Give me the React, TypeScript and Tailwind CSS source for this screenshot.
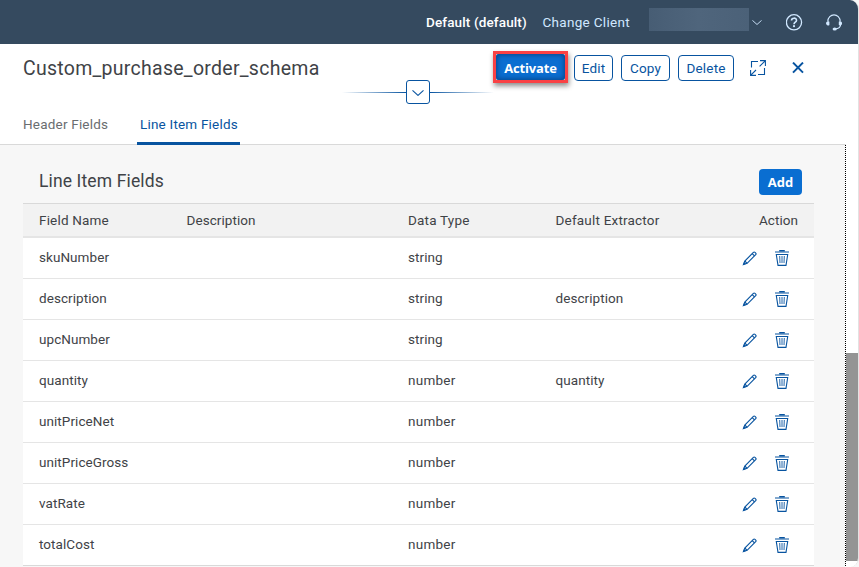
import React from 'react';

type Row = { name: string; type: string; extractor?: string };

const rows: Row[] = [
  { name: 'skuNumber', type: 'string' },
  { name: 'description', type: 'string', extractor: 'description' },
  { name: 'upcNumber', type: 'string' },
  { name: 'quantity', type: 'number', extractor: 'quantity' },
  { name: 'unitPriceNet', type: 'number' },
  { name: 'unitPriceGross', type: 'number' },
  { name: 'vatRate', type: 'number' },
  { name: 'totalCost', type: 'number' },
];

const columns = 'grid grid-cols-[147.5px_221.5px_147.5px_1fr] pl-4 pr-4 items-center';

function Pencil() {
  return (
    <svg width="16" height="16" viewBox="0 0 16 16" fill="none" stroke="#0854a0" strokeWidth="1.15">
      <path d="M1.4 14.6 L2.8 11 L11.4 2.4 Q12.2 1.6 13 2.4 L13.7 3.1 Q14.5 3.9 13.7 4.7 L5.1 13.3 Z" />
      <path d="M2.8 11 L5.1 13.3 M10.2 3.6 L12.5 5.9" />
      <path d="M1 15 L2 12 L4 14 Z" fill="#0854a0" stroke="none" />
    </svg>
  );
}

function Trash() {
  return (
    <svg width="14" height="16" viewBox="0 0 14 16" fill="none" stroke="#0854a0">
      <path d="M4.2 0.6 H9.8 M0 2 H14" strokeWidth="1.2" />
      <path d="M1.3 4.5 H12.7 L11 15.4 H3 Z" strokeWidth="1.1" />
      <path d="M4.7 6 L5 13 M7 6 V13 M9.3 6 L9 13" strokeWidth="0.9" />
    </svg>
  );
}

function Chevron({ className, color, width = 12 }: { className?: string; color: string; width?: number }) {
  return (
    <svg className={className} width={width} height={width / 2} viewBox="0 0 12 6" fill="none" stroke={color} strokeWidth="1.1">
      <path d="M0.5 0.4 L6 5.4 L11.5 0.4" />
    </svg>
  );
}

const button =
  'h-[26px] shrink-0 flex items-center justify-center rounded-[4px] border border-[#0854a0] text-[#0854a0] bg-white whitespace-nowrap';

export default function App() {
  return (
    <div className="w-[859px] h-[567px] overflow-hidden bg-[#f7f7f7] font-['Roboto',sans-serif] text-[13.5px] leading-[20px] tracking-[0.2px] text-[#3f4347]">
      <div className="w-[859px] h-[567px] flex flex-col overflow-hidden rounded-tr-[9px] rounded-br-[9px] border-r border-[#e2e2e2] bg-white">
        <header className="h-[44px] shrink-0 bg-[#354a5f] flex items-center text-white">
          <span className="ml-[426px] w-[101px] whitespace-nowrap font-medium tracking-[0.13px]">Default (default)</span>
          <span className="ml-[15.5px] w-[88px] whitespace-nowrap text-[#d1e8ff] tracking-[0.3px]">Change Client</span>
          <div className="ml-[18.5px] -mt-[5px] w-[100px] h-[23px] bg-linear-to-r from-[#475d74] via-[#4f657c] to-[#4b6178]" />
          <Chevron className="ml-[3px]" color="#d1e8ff" width={10} />
          <svg className="ml-[24px]" width="17" height="17" viewBox="0 0 17 17" fill="none" stroke="#d1e8ff">
            <circle cx="8" cy="8.3" r="7.6" strokeWidth="1.3" />
            <path d="M5.5 6.6 C5.5 3.4 10.5 3.4 10.5 6.4 C10.5 8.2 8 8.3 8 10.2" strokeWidth="1.6" />
            <circle cx="8" cy="12.2" r="1.1" fill="#d1e8ff" stroke="none" />
          </svg>
          <svg className="ml-[23px]" width="17" height="17" viewBox="0 0 17 17" fill="none" stroke="#d1e8ff">
            <path d="M1.8 7.6 C1.8 -1.3 14.2 -1.3 14.2 7.6" strokeWidth="1.2" />
            <path d="M14.8 10 C14.7 13 12.5 14.7 9 15" strokeWidth="1.1" />
            <path d="M1.2 7.6 Q3.4 6.8 3.4 8 V10.8 Q3.4 12 1.6 11.4 Q0 10.8 0 9.5 Q0 8 1.2 7.6 Z M15 7.6 Q12.8 6.8 12.8 8 V10.8 Q12.8 12 14.6 11.4 Q16.1 10.8 16.1 9.5 Q16.1 8 15 7.6 Z" fill="#d1e8ff" stroke="none" />
            <ellipse cx="8.7" cy="15" rx="2.1" ry="1.5" fill="#d1e8ff" stroke="none" />
          </svg>
        </header>

        <section className="h-[101px] shrink-0 w-[846px] flex flex-col border-b border-[#d9d9d9]">
          <div className="h-[36px] pt-[7px] flex">
            <h1 className="ml-[23px] mt-[4px] w-[470px] text-[19.5px] leading-[28px] whitespace-nowrap tracking-[0.27px]">Custom_purchase_order_schema</h1>
            <div className="w-[75px] h-[32px] shrink-0 border-[3px] border-[#f94144] shadow-[1px_3px_5px_rgba(0,0,0,0.45)] bg-[#c9ccc9]">
              <button className="w-full h-full pt-[2px] rounded-[3px] bg-[#0a6ed1] text-white font-['Open_Sans',sans-serif] text-[13px] font-bold tracking-[-0.15px] shadow-[inset_0_0_5px_1px_#07458a]">Activate</button>
            </div>
            <button className={`${button} ml-[6px] mt-[4px] w-[39px]`}>Edit</button>
            <button className={`${button} ml-[8px] mt-[4px] w-[49px]`}>Copy</button>
            <button className={`${button} ml-[8px] mt-[4px] w-[56px]`}>Delete</button>
            <svg className="ml-[16px] mt-[9px] shrink-0" width="16" height="16" viewBox="0 0 16 16" fill="none" stroke="#0854a0" strokeWidth="1.1">
              <path d="M1.5 7.5 V1.5 H8 M8 14.5 H14.5 V8" />
              <path d="M10 0.6 H15.4 V6 M15.2 0.8 L9.6 6.4 M0.6 10 V15.4 H6 M0.8 15.2 L6 10" />
            </svg>
            <svg className="ml-[26px] mt-[11px] shrink-0" width="12" height="12" viewBox="0 0 12 12" stroke="#0854a0" strokeWidth="2">
              <path d="M1 0.6 L11 10.6 M11 0.6 L1 10.6" />
            </svg>
          </div>
          <div className="ml-[342px] w-[152px] h-[24px] flex items-center">
            <div className="h-px flex-1 bg-linear-to-r from-transparent to-[#0854a0]" />
            <div className="w-6 h-6 rounded-[3px] border border-[#0854a0] bg-white flex items-center justify-center pt-[2px]">
              <Chevron color="#0854a0" />
            </div>
            <div className="h-px flex-1 bg-linear-to-l from-transparent to-[#0854a0]" />
          </div>
          <nav className="ml-[23px] -mb-px flex-1 flex whitespace-nowrap">
            <div className="w-[114px] pt-[10px] text-[#6a6d70]">Header Fields</div>
            <div className="w-[103px] pt-[10px] pl-[3px] text-[#0854a0] border-b-[3px] border-[#0854a0] rounded-t-[1px]">Line Item Fields</div>
          </nav>
        </section>

        <div className="flex flex-1 min-h-0">
          <main className="w-[845px] bg-[#f7f7f7] pl-[23px] pr-[31px]">
            <div className="h-[58px] pl-4 pr-3 flex justify-between items-start">
              <h2 className="text-[17.5px] leading-[24px] mt-[24px] tracking-[0.13px]">Line Item Fields</h2>
              <button className="mt-[24px] w-[43px] h-[26px] rounded-[4px] bg-[#0a6ed1] text-white font-['Open_Sans',sans-serif] text-[13px] font-bold tracking-[0.1px]">Add</button>
            </div>
            <div className={`${columns} h-[35px] bg-[#f2f2f2] border-t border-b-2 border-t-[#d9d9d9] border-b-[#e5e5e5]`}>
              <span className="tracking-[0.18px]">Field Name</span>
              <span className="tracking-[0.07px]">Description</span>
              <span>Data Type</span>
              <span className="flex justify-between">
                <span>Default Extractor</span>
                <span className="tracking-[0.05px]">Action</span>
              </span>
            </div>
            {rows.map((row) => (
              <div key={row.name} className={`${columns} h-[41px] bg-white border-b border-[#e5e5e5] last:border-[#d9d9d9] tracking-[0.06px]`}>
                <span className="pb-[2px]">{row.name}</span>
                <span />
                <span className={row.type === 'number' ? 'pb-[2px] tracking-[0.25px]' : 'pb-[2px]'}>{row.type}</span>
                <span className="flex items-center justify-between">
                  <span className="pb-[2px]">{row.extractor}</span>
                  <span className="flex gap-[17px] pr-[9px]">
                    <Pencil />
                    <Trash />
                  </span>
                </span>
              </div>
            ))}
          </main>
          <div className="w-px bg-[repeating-linear-gradient(to_bottom,#000_0_1px,#fff_1px_2px)]" />
          <div className="flex-1 pt-[208px] bg-white">
            <div className="h-[208px] bg-[#949494]" />
          </div>
        </div>
      </div>
    </div>
  );
}
